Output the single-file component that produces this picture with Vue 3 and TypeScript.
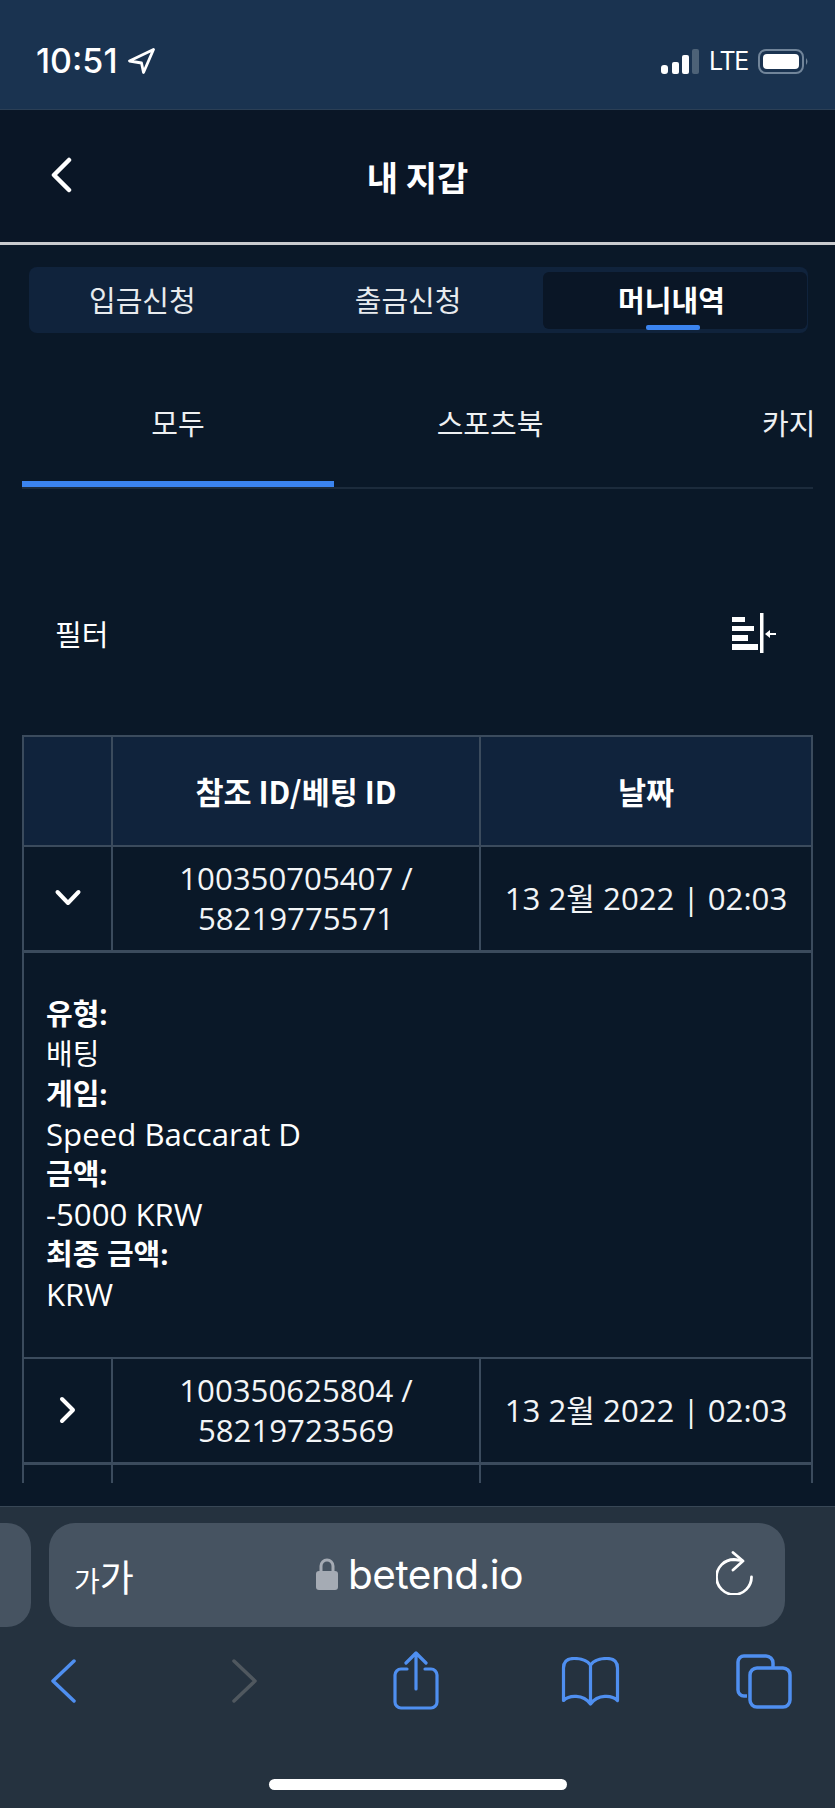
<script setup lang="ts">
interface MoneyRow {
  id: string
  betId: string
  date: string
  open: boolean
}

const walletTabs = ['입금신청', '출금신청', '머니내역']
const gameTabs = ['모두', '스포츠북', '카지노']

const rows: MoneyRow[] = [
  { id: '100350705407', betId: '58219775571', date: '13 2월 2022 | 02:03', open: true },
  { id: '100350625804', betId: '58219723569', date: '13 2월 2022 | 02:03', open: false },
  { id: '100350573780', betId: '58219690112', date: '13 2월 2022 | 02:03', open: false },
]

const details = [
  { label: '유형:', value: '배팅', korean: true },
  { label: '게임:', value: 'Speed Baccarat D', korean: false },
  { label: '금액:', value: '-5000 KRW', korean: false },
  { label: '최종 금액:', value: 'KRW', korean: false },
]
</script>

<template>
  <div class="phone">
    <div class="status-bar">
      <div class="clock">
        <span>10:51</span>
        <svg class="location" width="27" height="26" viewBox="0 0 27 26">
          <path d="M25.500 1.500 L1.500 13 L13.500 15 L15.500 24.500 Z" fill="none" stroke="#fff" stroke-width="2.800" stroke-linejoin="round" />
        </svg>
      </div>
      <div class="signal">
        <svg width="39" height="25" viewBox="0 0 39 25">
          <rect x="0" y="16" width="7" height="9" rx="3" fill="#fff" />
          <rect x="11" y="13" width="7" height="12" rx="2" fill="#fff" />
          <rect x="21" y="6" width="7" height="19" rx="2" fill="#fff" />
          <rect x="31" y="0" width="7" height="25" rx="2" fill="#4d6277" />
        </svg>
        <span class="lte">LTE</span>
        <svg width="52" height="25" viewBox="0 0 52 25">
          <rect x="1" y="1" width="44" height="23" rx="7" fill="none" stroke="#71859a" stroke-width="2" />
          <rect x="5" y="5" width="36" height="15" rx="4" fill="#fff" />
          <path d="M48 9 Q51 12.500 48 16 Z" fill="#71859a" />
        </svg>
      </div>
    </div>

    <header class="top-nav">
      <svg class="nav-back" width="24" height="36" viewBox="0 0 24 36">
        <path d="M20 3 L5 18 L20 33" fill="none" stroke="#fff" stroke-width="4.500" stroke-linecap="round" stroke-linejoin="round" />
      </svg>
      <h1>내 지갑</h1>
    </header>

    <main class="content">
      <div class="wallet-tabs">
        <div
          v-for="(tab, i) in walletTabs"
          :key="tab"
          class="wallet-tab"
          :class="{ active: i === 2 }"
        >
          {{ tab }}
        </div>
      </div>

      <div class="game-tabs">
        <div
          v-for="(tab, i) in gameTabs"
          :key="tab"
          class="game-tab"
          :class="{ active: i === 0 }"
        >
          {{ tab }}
        </div>
      </div>

      <div class="filter-row">
        <span>필터</span>
        <svg width="45" height="40" viewBox="0 0 45 40">
          <rect x="0" y="4" width="13" height="5" fill="#fff" />
          <rect x="0" y="13" width="22" height="5" fill="#fff" />
          <rect x="0" y="22" width="16" height="6" fill="#fff" />
          <rect x="0" y="31" width="26" height="6" fill="#fff" />
          <rect x="28" y="0" width="3.500" height="40" fill="#fff" />
          <path d="M33 21 L38 17 V20 H44 V22 H38 V25 Z" fill="#fff" />
        </svg>
      </div>

      <div class="table-clip">
        <table>
          <colgroup>
            <col class="col-toggle">
            <col class="col-id">
            <col>
          </colgroup>
          <thead>
            <tr>
              <th />
              <th>참조 ID/베팅 ID</th>
              <th>날짜</th>
            </tr>
          </thead>
          <tbody>
            <template v-for="row in rows" :key="row.id">
              <tr class="data-row">
                <td>
                  <svg class="toggle" width="28" height="28" viewBox="0 0 28 28">
                    <path
                      :d="row.open ? 'M3.500 8 L14 19 L24.500 8' : 'M8 3 L19 14 L8 25'"
                      fill="none"
                      stroke="#fff"
                      stroke-width="4"
                      stroke-linecap="round"
                      stroke-linejoin="round"
                    />
                  </svg>
                </td>
                <td>{{ row.id }} /<br>{{ row.betId }}</td>
                <td>{{ row.date }}</td>
              </tr>
              <tr v-if="row.open">
                <td colspan="3" class="detail">
                  <template v-for="item in details" :key="item.label">
                    <strong>{{ item.label }}</strong>
                    <div :class="{ korean: item.korean }">{{ item.value }}</div>
                  </template>
                </td>
              </tr>
            </template>
          </tbody>
        </table>
      </div>
    </main>

    <footer class="browser-bar">
      <div class="url-row">
        <div class="prev-tab" />
        <div class="url-field">
          <span class="aa"><small>가</small>가</span>
          <span class="address">
            <svg width="22" height="32" viewBox="0 0 22 32">
              <path d="M5 14 V8 a6 6 0 0 1 12 0 V14" fill="none" stroke="#a5abb4" stroke-width="3" />
              <rect x="0" y="13" width="22" height="19" rx="3" fill="#a5abb4" />
            </svg>
            betend.io
          </span>
          <svg class="reload" width="38" height="44" viewBox="0 0 38 44">
            <path d="M35.500 26 A17.500 17.500 0 1 1 18 8.500 L26 9.500" fill="none" stroke="#fff" stroke-width="2.800" stroke-linecap="round" stroke-linejoin="round" />
            <path d="M17 1.500 L27 10 L17 19" fill="none" stroke="#fff" stroke-width="2.800" stroke-linecap="round" stroke-linejoin="round" />
          </svg>
        </div>
      </div>
      <div class="tool-row">
        <svg class="tool-back" width="25" height="44" viewBox="0 0 25 44">
          <path d="M23 2 L2 22 L23 42" fill="none" stroke="#4f8ff0" stroke-width="3.500" stroke-linecap="round" stroke-linejoin="round" />
        </svg>
        <svg class="tool-next" width="25" height="44" viewBox="0 0 25 44">
          <path d="M2 2 L23 22 L2 42" fill="none" stroke="#50585f" stroke-width="3.500" stroke-linecap="round" stroke-linejoin="round" />
        </svg>
        <svg class="tool-share" width="46" height="59" viewBox="0 0 46 59">
          <path d="M14 18 H8 a6 6 0 0 0 -6 6 V51 a6 6 0 0 0 6 6 H38 a6 6 0 0 0 6 -6 V24 a6 6 0 0 0 -6 -6 H32" fill="none" stroke="#4f8ff0" stroke-width="3.200" stroke-linecap="round" />
          <path d="M23 38 V2 M13 12 L23 2 L33 12" fill="none" stroke="#4f8ff0" stroke-width="3.200" stroke-linecap="round" stroke-linejoin="round" />
        </svg>
        <svg class="tool-book" width="59" height="50" viewBox="0 0 59 50">
          <path d="M29.500 8 C26 3 19 1.500 13 1.500 C6 1.500 2.500 5 2.500 11 V43.500 C8 38 22 37 29.500 47 C37 37 51 38 56.500 43.500 V11 C56.500 5 53 1.500 46 1.500 C40 1.500 33 3 29.500 8 V46" fill="none" stroke="#4f8ff0" stroke-width="3.200" stroke-linecap="round" stroke-linejoin="round" />
        </svg>
        <svg class="tool-tabs" width="56" height="55" viewBox="0 0 56 55">
          <path d="M11 42 H8 a6 6 0 0 1 -6 -6 V8 a6 6 0 0 1 6 -6 H30 a7 7 0 0 1 7 7 V13" fill="none" stroke="#4f8ff0" stroke-width="3.500" />
          <rect x="14" y="14" width="40" height="39" rx="7" fill="none" stroke="#4f8ff0" stroke-width="3.500" />
        </svg>
      </div>
      <div class="home-indicator" />
    </footer>
  </div>
</template>

<style scoped>
.phone {
  width: 835px;
  height: 1808px;
  display: flex;
  flex-direction: column;
  overflow: hidden;
  background: #0a1828;
  color: #fff;
  font-family: "Open Sans", "Noto Sans CJK KR", sans-serif;
}

.status-bar {
  height: 110px;
  flex: none;
  box-sizing: border-box;
  padding: 49px 25px 0 36px;
  display: flex;
  justify-content: space-between;
  align-items: flex-start;
  background: #1a3350;
  border-bottom: 1px solid #2b3f55;
}

.clock {
  display: flex;
  align-items: center;
  gap: 10px;
  margin-top: -1px;
  font-family: Inter, sans-serif;
  font-size: 34px;
  font-weight: 500;
  line-height: 26px;
}

.signal {
  display: flex;
  align-items: center;
  gap: 9px;
}

.lte {
  margin-right: 1px;
  font-family: Inter, sans-serif;
  font-size: 25px;
  line-height: 25px;
  letter-spacing: -1.300px;
}

.top-nav {
  height: 135px;
  flex: none;
  box-sizing: border-box;
  position: relative;
  display: flex;
  align-items: center;
  justify-content: center;
  border-bottom: 3px solid #c9cbce;
  background: #0a1626;
}

.nav-back {
  position: absolute;
  left: 49px;
  top: 47px;
}

.top-nav h1 {
  margin: 0;
  font-family: "Noto Sans CJK KR", sans-serif;
  font-size: 34px;
  font-weight: 700;
}

.content {
  flex: 1;
  min-height: 0;
  padding: 22px 22px 0;
}

.wallet-tabs {
  display: flex;
  gap: 159px;
  height: 66px;
  box-sizing: border-box;
  margin: 0 5px 0 7px;
  padding: 5px 1px 4px 60px;
  border-radius: 8px;
  background: #10233c;
}

.wallet-tab {
  flex: none;
  display: flex;
  align-items: center;
  justify-content: center;
  position: relative;
  padding-bottom: 4px;
  white-space: nowrap;
  font-family: "Noto Sans CJK KR", sans-serif;
  font-size: 29px;
  color: #e8ebee;
}

.wallet-tab.active {
  box-sizing: border-box;
  width: 264px;
  margin-left: -77px;
  padding-right: 8px;
  border-radius: 6px;
  background: #0a1626;
  color: #fff;
  font-weight: 700;
}

.wallet-tab.active::after {
  content: "";
  position: absolute;
  left: 103px;
  bottom: -1px;
  width: 54px;
  height: 5px;
  border-radius: 2px;
  background: #3b84f0;
}

.game-tabs {
  display: flex;
  margin-top: 30px;
  height: 126px;
  box-sizing: border-box;
  overflow: hidden;
  border-bottom: 2px solid #1c2b3c;
}

.game-tab {
  flex: none;
  width: 312px;
  height: 124px;
  box-sizing: border-box;
  padding-top: 38px;
  text-align: center;
  font-family: "Noto Sans CJK KR", sans-serif;
  font-size: 29px;
  line-height: 42px;
  color: #eef0f2;
}

.game-tab.active {
  border-bottom: 6px solid #3b84f0;
}

.filter-row {
  display: flex;
  align-items: center;
  justify-content: space-between;
  height: 40px;
  margin-top: 124px;
  padding: 0 36px 0 33px;
  font-family: "Noto Sans CJK KR", sans-serif;
  font-size: 29px;
}

.table-clip {
  margin-top: 82px;
  height: 748px;
  overflow: hidden;
}

table {
  width: 791px;
  table-layout: fixed;
  border-collapse: collapse;
  font-size: 31.200px;
  line-height: 40px;
}

.col-toggle {
  width: 89px;
}

.col-id {
  width: 368px;
}

th,
td {
  border: 2px solid #3b4b5d;
  padding: 0;
  text-align: center;
}

th {
  height: 108px;
  background: #10233c;
  font-family: "Noto Sans CJK KR", sans-serif;
  font-size: 30.500px;
  font-weight: 700;
}

.data-row td {
  height: 101px;
  padding-bottom: 2px;
  font-weight: 400;
  color: #f3f5f7;
  border-bottom-width: 3px;
}

.toggle {
  display: block;
  margin: 0 auto;
}

td.detail {
  padding: 41px 22px 43px;
  text-align: left;
  line-height: 40px;
}

.detail strong {
  display: block;
  font-size: 29px;
  font-weight: 700;
}

.detail .korean {
  font-size: 29px;
}

.browser-bar {
  height: 302px;
  flex: none;
  box-sizing: border-box;
  background: #25323f;
  border-top: 1px solid #384756;
}

.url-row {
  display: flex;
  gap: 18px;
  height: 104px;
  margin-top: 16px;
}

.prev-tab {
  width: 31px;
  border-radius: 0 24px 24px 0;
  background: #465361;
}

.url-field {
  width: 736px;
  box-sizing: border-box;
  position: relative;
  display: flex;
  align-items: center;
  justify-content: center;
  border-radius: 26px;
  background: #465361;
}

.aa {
  position: absolute;
  left: 25px;
  top: 29px;
  font-family: "Noto Sans CJK KR", sans-serif;
  font-size: 37px;
  line-height: 48px;
}

.aa small {
  font-size: 28px;
}

.address {
  display: flex;
  align-items: center;
  gap: 10px;
  margin: 0 0 2px 5px;
  font-family: Inter, sans-serif;
  font-size: 40.500px;
  letter-spacing: -0.500px;
}

.reload {
  position: absolute;
  left: 667px;
  top: 28px;
}

.tool-row {
  display: flex;
  align-items: flex-start;
  height: 58px;
  margin-top: 24px;
  padding-left: 51px;
}

.tool-back {
  margin-top: 8px;
}

.tool-next {
  margin: 8px 0 0 156px;
}

.tool-share {
  margin-left: 136px;
}

.tool-book {
  margin: 6px 0 0 122px;
}

.tool-tabs {
  margin: 3px 0 0 116px;
}

.home-indicator {
  width: 298px;
  height: 11px;
  margin: 70px auto 0;
  border-radius: 6px;
  background: #fff;
}
</style>

<style>
body {
  background: #0a1828;
}
</style>
